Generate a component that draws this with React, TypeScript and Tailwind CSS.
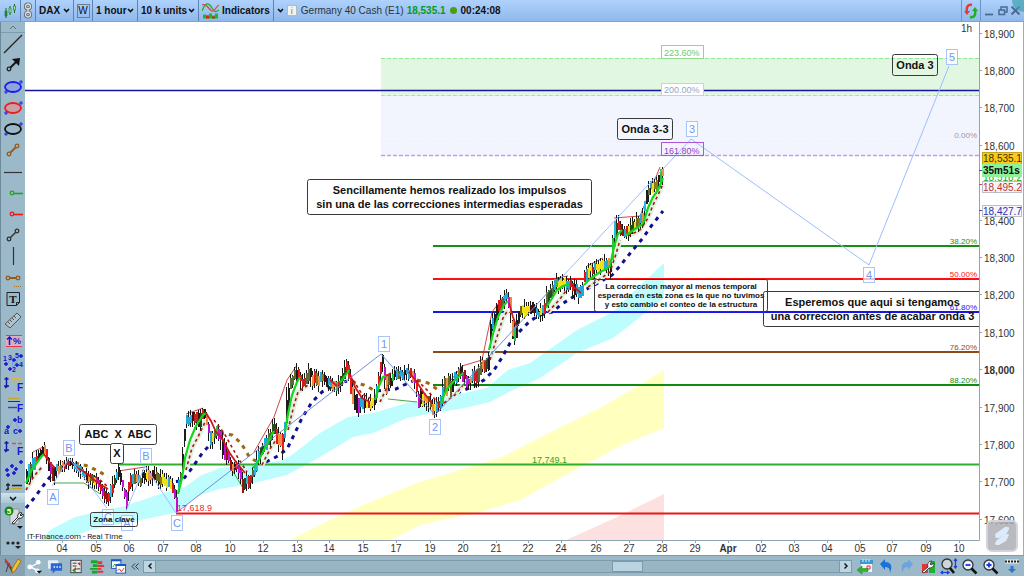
import type { ReactNode } from "react";

const FONT = "font-['Liberation_Sans',Arial,sans-serif]";

/* ---------- chart data ---------- */

// price envelope: x, high, low
const RANGE: [number, number, number][] = [
    [26, 465, 487], [30, 460, 480], [33, 452, 475], [39, 450, 460], [43, 440, 456], [47, 450, 470],
    [52, 464, 487], [57, 462, 475], [63, 461, 470], [70, 459, 466], [76, 463, 474], [82, 466, 478],
    [88, 472, 487], [95, 474, 486], [100, 481, 494], [104, 487, 500], [108, 492, 507], [111, 479, 498],
    [115, 474, 487], [118, 465, 484], [122, 479, 493], [126, 485, 511], [130, 473, 491], [136, 470, 485],
    [140, 474, 487], [145, 466, 481], [150, 470, 486], [155, 468, 483], [160, 472, 489], [165, 473, 487],
    [170, 476, 491], [173, 480, 496], [176, 490, 513], [178, 476, 495], [181, 464, 481], [183, 430, 465],
    [186, 414, 431], [190, 412, 425], [195, 411, 426], [199, 408, 431], [203, 404, 420], [207, 413, 430],
    [209, 424, 449], [213, 430, 446], [217, 422, 441], [220, 427, 449], [224, 439, 463], [228, 449, 469],
    [231, 459, 474], [235, 461, 471], [239, 463, 483], [243, 475, 498], [246, 473, 491], [250, 474, 491],
    [254, 462, 479], [257, 449, 469], [261, 444, 459], [265, 434, 451], [270, 427, 445], [274, 417, 436],
    [277, 426, 450], [281, 435, 451], [283, 428, 465], [285, 398, 435], [287, 379, 426], [289, 376, 396],
    [293, 370, 384], [297, 363, 379], [301, 377, 391], [305, 374, 388], [309, 363, 385], [315, 371, 393],
    [320, 369, 386], [325, 373, 387], [330, 377, 391], [335, 381, 395], [340, 374, 389], [344, 361, 379],
    [347, 355, 373], [350, 367, 396], [353, 387, 409], [358, 390, 422], [363, 394, 410], [368, 397, 409],
    [373, 397, 410], [376, 380, 401], [380, 360, 386], [382, 354, 373], [386, 369, 400], [390, 374, 386],
    [395, 364, 381], [400, 369, 381], [406, 367, 379], [411, 364, 379], [415, 374, 396], [418, 388, 408],
    [425, 392, 408], [430, 397, 411], [433, 401, 416], [437, 399, 415], [441, 387, 409], [444, 369, 396],
    [450, 374, 397], [455, 369, 386], [460, 365, 379], [464, 369, 386], [468, 377, 389], [473, 369, 386],
    [477, 367, 389], [481, 354, 373], [485, 357, 376], [488, 348, 371], [490, 315, 352], [494, 311, 326],
    [497, 299, 319], [502, 293, 309], [507, 291, 302], [510, 294, 322], [513, 325, 351], [517, 314, 341],
    [519, 301, 326], [525, 302, 315], [532, 301, 315], [538, 307, 321], [542, 304, 322], [546, 289, 311],
    [550, 284, 301], [556, 275, 291], [562, 277, 292], [568, 276, 291], [573, 281, 296], [578, 284, 304],
    [582, 279, 296], [585, 263, 281], [590, 264, 279], [596, 261, 276], [601, 257, 271], [606, 257, 273],
    [610, 257, 276], [612, 229, 260], [614, 217, 246], [618, 216, 233], [623, 227, 241], [628, 224, 239],
    [633, 217, 233], [638, 214, 229], [643, 207, 226], [645, 190, 216], [649, 180, 196], [654, 177, 193],
    [658, 174, 189], [660, 165, 187], [663, 168, 180],
];

const UP = ["#2a4a20", "#1fa8d8", "#e01818", "#1c1c1c", "#5a6a3a", "#2fb5e0", "#30c040"];
const DOWN = ["#a01010", "#f01818", "#1c1c1c", "#f08848", "#e01515", "#c818d8", "#c010d0"];
const SIDE = ["#f0e018", "#8a7a20", "#28a8d8", "#6a6a20", "#c82020", "#28a8d8", "#f09040", "#401010"];

const noise = (n: number) => {
    const v = Math.sin(n * 127.1 + 11.7) * 43758.5453;
    return v - Math.floor(v);
};

type Candle = { x: number; hi: number; lo: number; top: number; bottom: number; color: string };

const CANDLES: Candle[] = [];
for (let i = 0, seg = 0; ; i++) {
    const x = 26 + i * 2;
    if (x > 662) break;
    while (seg < RANGE.length - 2 && RANGE[seg + 1][0] < x) seg++;
    const a = RANGE[seg];
    const b = RANGE[seg + 1];
    const t = (x - a[0]) / (b[0] - a[0]);
    const hi = a[1] + (b[1] - a[1]) * t;
    const lo = a[2] + (b[2] - a[2]) * t;
    const h = lo - hi;
    const slope = (b[1] + b[2] - a[1] - a[2]) / (b[0] - a[0]);
    const set = slope < -2.5 ? UP : slope > 2.5 ? DOWN : SIDE;
    const top = hi + h * (0.05 + 0.3 * noise(i * 3));
    // neighbouring bars often share a colour
    const run = noise(i * 11) > 0.5 ? i : i - 1;
    CANDLES.push({
        x,
        hi: hi - 3 + h * 0.45 * noise(i),
        lo: lo + 3 - h * 0.45 * noise(i + 500),
        top,
        bottom: top + h * (0.4 + 0.3 * noise(i * 7)),
        color: set[Math.floor(noise(run * 5 + 2) * set.length)],
    });
}

const FAST_UP = [
    "26,483 31,471 36,464 41,457 44,454",
    "178,494 182,478 185,458 190,440 196,426 203,415 206,413",
    "253,468 258,462 264,450 270,438 274,431",
    "285,432 288,414 292,395 297,382 300,377",
    "340,383 345,376 349,370",
    "375,400 379,386 383,377 386,376",
    "441,403 446,390 455,380 463,373",
    "489,350 493,334 498,317 504,305 508,301",
    "546,308 551,300 557,290 563,286 570,284",
    "584,285 590,279 597,274 604,270 610,266 614,247 618,234 622,230",
    "625,236 635,229 643,224 648,208 653,197 658,190 663,178",
];
const FAST_DOWN = [
    "44,454 50,463 55,468", "76,467 86,473 98,483 108,489", "206,413 211,421 216,432 222,438 229,452 236,462 245,473",
    "330,380 337,386", "386,376 391,373", "350,374 355,387 362,398 370,402",
    "409,372 416,381 424,393 432,403", "509,303 513,317 517,328", "570,284 576,289 581,293",
];
const STOP_UP = [
    "26,490 34,476 42,467", "186,470 192,448 198,437 206,420", "262,465 270,449 276,440",
    "288,430 294,405 298,392 308,385", "380,402 388,385", "444,403 455,395 463,385",
    "490,360 496,340 503,318 508,310", "548,312 560,299 568,288", "588,287 600,279 610,272 616,254 620,240",
    "628,236 640,230 648,218 653,205 658,195 663,184",
];
const STOP_DOWN = ["84,472 98,478 108,487", "214,420 224,433 238,458 247,472", "353,380 362,394 372,399", "417,380 428,391 438,403"];
const SLOW_UP = [
    "26,508 35,497 43,486 50,477 55,471", "158,483 170,482 182,481 192,468 203,452 212,443",
    "266,462 278,456 287,449 293,437 302,418 312,402 322,392 333,386 347,381", "377,391 385,390 396,389 404,385 413,381",
    "457,393 472,387 484,380 494,370 503,356 510,343 519,332 530,321 540,315 552,312 562,304 573,297 583,291 600,282 612,275 620,266 632,251 643,238 652,225 663,211",
];
const SLOW_DOWN = ["75,463 88,466 100,472 108,477", "220,433 232,435 241,443 250,458 262,464", "352,382 364,385 374,390", "417,380 428,383 440,391"];

const RED_TREND = ["33,452 43,447", "118,471 145,467", "186,414 203,408", "254,452 274,417 287,380 297,365", "448,384 462,366 482,360 492,312 507,292", "556,278 568,276", "587,266 603,258", "614,218 640,216 660,167"];
const GREEN_TREND = ["54,483 84,483 100,494", "388,399 417,402", "232,470 243,488"];

const LEVELS = [
    { y: 246, color: "#159015", label: "38.20%" },
    { y: 279, color: "#ff1010", label: "50.00%" },
    { y: 312, color: "#1515f0", label: "61.80%" },
    { y: 352, color: "#8b4a1c", label: "76.20%" },
    { y: 385, color: "#128a12", label: "88.20%" },
];

const PRICES: [string, number][] = [
    ["18,900", 34], ["18,800", 71], ["18,700", 108], ["18,600", 146], ["18,400", 221], ["18,300", 258],
    ["18,200", 295], ["18,100", 333], ["18,000", 370], ["17,900", 408], ["17,800", 445], ["17,700", 482], ["17,600", 520],
];

const DAYS: [string, number][] = [
    ["04", 62], ["05", 96], ["06", 129], ["07", 163], ["08", 196], ["10", 230], ["12", 263], ["13", 297],
    ["14", 329], ["15", 363], ["17", 396], ["19", 430], ["20", 463], ["21", 496], ["22", 528], ["24", 561],
    ["26", 596], ["27", 629], ["28", 662], ["29", 695], ["Apr", 728], ["02", 761], ["03", 794], ["04", 827],
    ["05", 860], ["07", 892], ["09", 926], ["10", 959],
];

const WAVES: [string, number, number][] = [
    ["A", 53, 497], ["B", 69, 448], ["C", 108, 517], ["A", 127, 523], ["B", 146, 456], ["C", 177, 523],
    ["1", 384, 344], ["2", 435, 427], ["3", 692, 129], ["4", 869, 275], ["5", 952, 57],
];

/* ---------- chart ---------- */

function Lines({ list, ...rest }: { list: string[]; stroke: string; strokeWidth: number; strokeDasharray?: string }) {
    return (
        <g fill="none" {...rest}>
            {list.map((points) => <polyline key={points} points={points} />)}
        </g>
    );
}

function Note({ x, y, w, h, size, lines, step = 13, fill = "none" }: {
    x: number; y: number; w: number; h: number; size: number; lines: string[]; step?: number; fill?: string;
}) {
    const first = y + h / 2 - ((lines.length - 1) * step) / 2 + size * 0.36;
    return (
        <g>
            <rect x={x} y={y} width={w} height={h} rx="2" fill={fill} stroke="#3a3a3a" />
            {lines.map((line, i) => (
                <text key={line} x={x + w / 2} y={first + i * step} textAnchor="middle" fontSize={size} fontWeight="bold" fill="#111" xmlSpace="preserve">
                    {line}
                </text>
            ))}
        </g>
    );
}

function Chart() {
    return (
        <svg viewBox="25 22 998 533" className={`block h-full w-full bg-white ${FONT}`} role="img" aria-label="Germany 40 Cash, 1 hour">
            <defs>
                <clipPath id="plot"><rect x="25" y="22" width="954" height="519" /></clipPath>
            </defs>
            <g clipPath="url(#plot)">
                <rect x="381" y="58" width="598" height="38" fill="#e2f7e2" />
                <rect x="381" y="96" width="598" height="60" fill="#f2f5fe" />
                <path d="M381 58.5H979" stroke="#90e890" strokeDasharray="4 2" />
                <path d="M381 95.5H979" stroke="#c3cfd8" strokeDasharray="4 2" />
                <path d="M381 155.5H979" stroke="#cc9ae8" strokeDasharray="4 2" strokeWidth="1.4" />
                <path d="M381 141.5H979" stroke="#e9ecf6" strokeDasharray="1 2" />
                <path d="M25 90.5H979" stroke="#1414a0" strokeWidth="1.6" />

                {/* clouds */}
                <path fill="#bdfdfd" d="M40 541L50 530L75 517L100 511L125 506L160 494L185 487L200 476L220 468L250 465L280 461L292 455L320 433L348 417L373 413L407 403L433 399L460 394L487 388L508 370L530 363L577 330L613 312L630 295L664 263V298L630 325L613 338L577 353L540 378L513 390L490 402L460 409L433 413L407 418L373 433L353 437L320 457L287 475L250 484L220 489L200 495L175 513L130 522L90 530L62 541Z" />
                <path fill="#ffffbe" d="M288 541L330 520L375 500L417 483L460 470L500 458L555 430L600 408L640 385L664 370V428L620 446L560 478L520 500L480 512L420 525L388 541Z" />
                <path fill="#fde0e0" d="M564 541L615 518L664 494V541Z" />

                {LEVELS.map((l) => <path key={l.y} d={`M433 ${l.y}H979`} stroke={l.color} strokeWidth="2" />)}
                <path d="M118 464.5H979" stroke="#2fae2f" strokeWidth="2" />
                <path d="M176 513.5H979" stroke="#e81818" strokeWidth="2" />

                <Lines list={SLOW_UP} stroke="#10108e" strokeWidth={3} strokeDasharray="4 5" />
                <Lines list={SLOW_DOWN} stroke="#9a6a10" strokeWidth={3} strokeDasharray="4 5" />
                <Lines list={RED_TREND} stroke="#d03030" strokeWidth={0.9} />
                <Lines list={GREEN_TREND} stroke="#30a030" strokeWidth={0.9} />
                <Lines list={STOP_UP} stroke="#dff2df" strokeWidth={5} />
                <g shapeRendering="crispEdges">
                    {CANDLES.map((c) => (
                        <g key={c.x}>
                            <rect x={c.x} y={c.hi} width="1" height={c.lo - c.hi} fill="#181818" />
                            <rect x={c.x} y={c.top} width="2" height={c.bottom - c.top} fill={c.color} />
                        </g>
                    ))}
                </g>
                <Lines list={FAST_UP} stroke="#12d81c" strokeWidth={2.2} />
                <Lines list={FAST_DOWN} stroke="#d01818" strokeWidth={1.8} />
                <Lines list={STOP_UP} stroke="#b01515" strokeWidth={1.6} strokeDasharray="3 3" />
                <Lines list={STOP_DOWN} stroke="#b01515" strokeWidth={1.6} strokeDasharray="3 3" />

                <path d="M176 513L381 354L435 415L563 276" fill="none" stroke="#6f8fdc" />
                <path d="M52 486L69 458L107 508M126 511L145 466L176 513M563 276L691 139L869 265L949 66" fill="none" stroke="#9dbdff" />

                <g fontSize="9">
                    <rect x="661.5" y="45.500" width="42" height="13" fill="#fff" stroke="#90d890" />
                    <text x="664" y="56" fill="#6ccc6c">223.60%</text>
                    <rect x="661.5" y="83.5" width="42" height="12" fill="#fff" stroke="#c4d0ea" />
                    <text x="664" y="93" fill="#93a6c8">200.00%</text>
                    <rect x="661.5" y="142.5" width="42" height="13" fill="none" stroke="#a858d8" />
                    <text x="664" y="154" fill="#9838cc">161.80%</text>
                    <text x="532" y="463" fill="#2fa32f">17,749.1</text>
                    <text x="177" y="511" fill="#f02828">17,618.9</text>
                </g>

                {WAVES.map(([t, x, y]) => (
                    <g key={`${t}${x}`}>
                        <rect x={x - 5.5} y={y - 7.5} width="11" height="15" fill="#fff" fillOpacity="0.7" stroke="#a9c4fa" />
                        <text x={x} y={y + 4} textAnchor="middle" fontSize="11" fill="#6f98f0">{t}</text>
                    </g>
                ))}

                <Note x={307.5} y={179.5} w={284} h={35} size={11} fill="#fff" step={14} lines={["Sencillamente hemos realizado los impulsos", "sin una de las correcciones intermedias esperadas"]} />
                <Note x={617.5} y={118.5} w={55} h={21} size={11} lines={["Onda 3-3"]} />
                <Note x={892.5} y={54.5} w={45} h={21} size={11} lines={["Onda 3"]} />
                <Note x={79.5} y={424.5} w={77} h={20} size={11} fill="#fff" lines={["ABC  X  ABC"]} />
                <Note x={110.5} y={443.5} w={13} h={20} size={11} fill="#fff" lines={["X"]} />
                <Note x={90.5} y={512.5} w={47} h={14} size={8} lines={["Zona clave"]} />
                <Note x={594.5} y={279.5} w={173} h={32} size={8} step={9} lines={["La correccion mayor al menos temporal", "esperada en esta zona es la que no tuvimos", "y esto cambio el conteo de la estructura"]} />
                <Note x={763.5} y={291.5} w={218} h={35} size={11} step={14} lines={["Esperemos que aqui si tengamos", "una correccion antes de acabar onda 3"]} />

                <g fontSize="8" textAnchor="end">
                    {LEVELS.map((l) => <text key={l.y} x="977" y={l.y - 2} fill={l.color}>{l.label}</text>)}
                    <text x="977" y="138" fill="#999">0.00%</text>
                </g>
                <text x="961" y="32" fontSize="10" fill="#333">1h</text>
                <text x="27" y="539" fontSize="8" fill="#222" className="font-['Roboto',sans-serif]">IT-Finance.com - Real Time</text>
            </g>

            {/* axes */}
            <path d="M25 540.5H979.5V22" fill="none" stroke="#8fa5b5" />
            {PRICES.map(([label, y]) => (
                <g key={label}>
                    <path d={`M979 ${y - 0.5}h3`} stroke="#8fa5b5" />
                    <text x="984" y={y + 4} fontSize="10" fill="#333" fontWeight={label === "18,000" ? "bold" : "normal"}>{label}</text>
                </g>
            ))}
            {DAYS.map(([label, x]) => (
                <g key={x}>
                    <path d={`M${x + 0.5} 541v2`} stroke="#8fa5b5" />
                    <text x={x} y="552" textAnchor="middle" fontSize="10" fill="#333" fontWeight={label === "Apr" ? "bold" : "normal"}>{label}</text>
                </g>
            ))}
            <text x="983" y="181" fontSize="10" fill="#20a020">18,518.2</text>
            <path d="M979 170.5h3M979 210.5h3" stroke="#4444aa" />
            <path d="M979 184.5h3" stroke="#e04040" />
            <rect x="982.5" y="152.5" width="39" height="12" fill="#f7cb18" stroke="#c9a216" />
            <text x="983" y="162" fontSize="10" fill="#3a3000">18,535.1</text>
            <rect x="982" y="164" width="40" height="13" fill="#8df09a" />
            <text x="983" y="174" fontSize="10" fontWeight="bold" fill="#111">35m51s</text>
            <rect x="982.5" y="181.5" width="39" height="11" fill="#f6f6f8" stroke="#b8c0c8" />
            <text x="983" y="191" fontSize="10" fill="#c03030">18,495.2</text>
            <rect x="982.5" y="205.5" width="39" height="11" fill="#f6f6f8" stroke="#b8c0c8" />
            <text x="983" y="215" fontSize="10" fill="#3030b0">18,427.7</text>

            {/* logo badge */}
            <rect x="987" y="521" width="30" height="30" rx="5" fill="#a9a9b1" fillOpacity="0.8" stroke="#d3d3d9" strokeWidth="2" />
            <path d="M995 536c0-2 1-3 3-4l7-5h3c1 0 1 1 1 2l-2 4-8 5h-3zM995 543l2-3 8-6h3c1 0 1 2 0 3l-2 4-7 4h-3c-1 0-1-1-1-2z" fill="#dcebfb" />
        </svg>
    );
}

/* ---------- left tool bar ---------- */

const Dots = ({ color, pts }: { color: string; pts: [number, number][] }) => (
    <g fill="#9bb9c8" stroke={color} strokeWidth="1.3">
        {pts.map(([x, y]) => <circle key={`${x}-${y}`} cx={x} cy={y} r="1.8" />)}
    </g>
);

const oval = (stroke: string, fill: string) => (
    <>
        <ellipse cx="12" cy="11" rx="8" ry="5" fill={fill} stroke={stroke} strokeWidth="1.8" />
        <path d="M18 6h4M20 4v4M3 16h4M5 14v4" stroke="#2222e8" />
    </>
);

const F = ({ y = 18 }: { y?: number }) => <text x="16" y={y} fontSize="10" fontWeight="bold" fill="#1616e0">F</text>;
const anchor = <path d="M5.500 4v10M3.500 6h4M3 13h5M4 15l3-2" stroke="#1515a8" strokeWidth="1.4" fill="none" />;
const plus = (x: number, y: number) => `M${x - 2} ${y}h4M${x} ${y - 2}v4`;

const TOOLS: [string, ReactNode][] = [
    ["Line", <path d="M3 20L21 2" stroke="#222" strokeWidth="1.2" />],
    ["Arrow", <><path d="M8 15l8-8" stroke="#111" strokeWidth="1.8" /><path d="M11 5l8-1-1 8z" fill="#111" /><Dots color="#222" pts={[[8, 15]]} /></>],
    ["Blue ellipse", oval("#1a1af0", "#8ea4dc")],
    ["Red ellipse", oval("#f01a1a", "#c9a0a8")],
    ["Ellipse", oval("#111", "none")],
    ["Segment", <><path d="M8 15l8-8" stroke="#9a5a14" strokeWidth="1.8" /><Dots color="#9a5a14" pts={[[8, 15], [16, 7]]} /></>],
    ["Horizontal line", <path d="M3 11.5h18" stroke="#333" strokeWidth="1.2" />],
    ["Green ray", <><path d="M12 11.5h10" stroke="#22a622" strokeWidth="1.6" /><Dots color="#22a622" pts={[[11, 11]]} /></>],
    ["Red ray", <><path d="M12 11.5h10" stroke="#f01a1a" strokeWidth="1.6" /><Dots color="#f01a1a" pts={[[11, 11]]} /></>],
    ["Trend segment", <><path d="M8 15l8-8" stroke="#333" strokeWidth="1.4" /><Dots color="#333" pts={[[8, 15], [16, 7]]} /></>],
    ["Vertical line", <path d="M12.5 2v18" stroke="#333" strokeWidth="1.2" />],
    ["Horizontal segment", <><path d="M8 11h8" stroke="#9a5a14" strokeWidth="2" /><Dots color="#9a5a14" pts={[[7, 11], [17, 11]]} /><path d="M13 19.5h8" stroke="#a5742e" strokeDasharray="1 1" /></>],
    ["Text", <><path d="M6 4.5h12.5v10l-3 3H6z" fill="none" stroke="#222" /><path d="M18.5 14.5h-3v3" fill="none" stroke="#222" /><text x="12" y="15" fontSize="11" fontWeight="bold" textAnchor="middle" fill="#111" className="font-['Liberation_Serif',serif]">T</text></>],
    ["Ruler", <><path d="M4 15L16 4l4 4L9 19z" fill="#aec4ce" stroke="#555" /><path d="M7 13l2 2M9 11l2 2M11 9l2 2M13 7l2 2" stroke="#555" /></>],
    ["Percent change", <><rect x="5" y="5" width="16" height="11" fill="#d8b0c0" /><path d="M5 5.5h16M5 16.5h16" stroke="#e83a4a" /><path d="M8.5 15V7M6 9.5l2.5-2.5 2.5 2.5" fill="none" stroke="#1515d0" strokeWidth="1.5" /><text x="12" y="14" fontSize="9" fontWeight="bold" fill="#1515d0">%</text></>],
    ["Elliott wave", <><path d="M5 14L11 5l1 11 6-11" stroke="#6f98f0" fill="none" /><path d={plus(5, 12) + plus(13, 8) + plus(20, 4) + plus(9, 17) + plus(16, 13)} stroke="#1515d0" strokeWidth="1.4" /><g fontSize="7" fontWeight="bold" fill="#1515d0"><text x="2" y="9">1</text><text x="7" y="8">3</text><text x="14" y="6">5</text><text x="11" y="20">2</text><text x="18" y="15">4</text></g></>],
    ["Fibonacci retracement", <>{anchor}<path d="M11 5.5h10M11 8.5h10" stroke="#d8b848" strokeDasharray="3 1" strokeWidth="1.4" /><path d="M11 12.5h5" stroke="#9eb2e8" /><F /></>],
    ["Fibonacci levels", <><path d="M7 4.5h12" stroke="#c8a828" strokeWidth="1.4" /><path d="M7 7.5h12" stroke="#333" /><path d="M7 13.5h9" stroke="#3a3ad8" strokeWidth="1.4" /><F /></>],
    ["ABC pattern", <><path d="M6 16L13 3l6 14" stroke="#7fa4e8" fill="none" /><path d={plus(7, 12) + plus(14, 5) + plus(19, 16)} stroke="#1515d0" strokeWidth="1.4" /><g fontSize="9" fill="#1515d0" fontWeight="bold"><text x="3" y="19">a</text><text x="16" y="8">b</text><text x="12" y="19">c</text></g></>],
    ["Fibonacci extension", <>{anchor}<path d="M11 6.5h10" stroke="#e05050" strokeDasharray="4 2" strokeWidth="1.4" /><path d="M11 12.5h4" stroke="#9eb2e8" /><F /></>],
    ["Channel points", <><path d="M5 17l14-12M5 10l14 3" stroke="#9eb8f0" /><path d={plus(6, 12) + plus(11, 8) + plus(15, 11) + plus(20, 4) + plus(7, 17) + plus(13, 15)} stroke="#1515d0" strokeWidth="1.5" /></>],
    ["Fibonacci fan", <><path d="M7 4v7M5 6h4M5 11l3-2" stroke="#222" strokeWidth="1.3" /><path d="M11 6.5h10" stroke="#222" strokeWidth="1.5" /><path d="M11 9.5h10" stroke="#c8a020" /></>],
];

function ToolBar() {
    return (
        <aside className="flex w-[25px] shrink-0 flex-col border-l border-[#6f8c9c] bg-[#9bb9c8]">
            <button aria-label="Scroll tools up" className="flex h-[11px] shrink-0 items-center justify-center border-b border-[#7f9cac]">
                <svg width="8" height="5" viewBox="0 0 8 5" fill="none" stroke="#5f7480"><path d="M1 4l3-3 3 3" /></svg>
            </button>
            <div className="flex min-h-0 flex-1 flex-col overflow-hidden">
                {TOOLS.map(([name, icon], i) => (
                    <button key={name} aria-label={name} className={`min-h-0 basis-0 overflow-hidden ${i === TOOLS.length - 1 ? "grow-2" : "grow-3"}`}>
                        <svg width="24" height="21" viewBox="0 0 24 21" className={FONT}>{icon}</svg>
                    </button>
                ))}
            </div>
            <button aria-label="Scroll tools down" className="flex h-[10px] shrink-0 items-center justify-center bg-linear-to-b from-[#cfe2ee] to-[#a9c6d6]">
                <svg width="8" height="5" viewBox="0 0 8 5" fill="none" stroke="#111" strokeWidth="1.5"><path d="M1 1l3 3 3-3" /></svg>
            </button>
            <button aria-label="Settings" className="h-7 shrink-0">
                <svg width="24" height="28" viewBox="0 0 24 28" className={FONT}>
                    <path d="M9 6h9v15H9z" fill="#d5dde2" stroke="#8896a0" />
                    <path d="M11 20l6-6a3 3 0 0 1 4-4l-2 2 1 1 2-2a3 3 0 0 1-4 4l-5 6z" fill="#fff" stroke="#222" />
                    <circle cx="8" cy="8" r="4.5" fill="#158a15" />
                    <text x="8" y="11" fontSize="8" fontWeight="bold" textAnchor="middle" fill="#fff">5</text>
                    <path d="M16 23h6l-3 3z" fill="#111" />
                </svg>
            </button>
            <button aria-label="More tools" className="h-6 shrink-0">
                <svg width="24" height="24" viewBox="0 0 24 24" fill="#222">
                    <circle cx="7" cy="12" r="1.6" /><circle cx="12" cy="12" r="1.6" /><circle cx="17" cy="12" r="1.6" />
                    <path d="M14 15h6l-3 3z" />
                </svg>
            </button>
        </aside>
    );
}

/* ---------- top bar ---------- */

const Chevron = () => (
    <svg width="7" height="5" viewBox="0 0 7 5" fill="none" stroke="#111" strokeWidth="1.6" className="pointer-events-none shrink-0">
        <path d="M1 1l2.5 2.5L6 1" />
    </svg>
);

function Pick({ label, value, width }: { label: string; value: string; width: string }) {
    return (
        <label className="flex h-full items-center border-r border-[#5d83b5] px-[3px]">
            <select aria-label={label} defaultValue={value} className={`appearance-none bg-transparent font-bold outline-none ${width}`}>
                <option>{value}</option>
            </select>
            <Chevron />
        </label>
    );
}

function TopBar() {
    return (
        <header className="relative flex h-[22px] shrink-0 items-center overflow-hidden border-b border-[#7ea3d4] bg-linear-to-b from-[#aed2fd] to-[#90b8ea] text-[10px] leading-3 text-[#111]">
            <button aria-label="Chart type" className="flex h-full w-[21px] items-center justify-center border-r border-[#5d83b5]">
                <svg width="14" height="16" viewBox="0 0 14 16" fill="#1f9a2a" stroke="#14701c">
                    <path d="M3 5v10M7 3v9M11.5 1v9" />
                    <path d="M2 8h2v5H2z" strokeWidth=".6" />
                    <path d="M6 5h2v5H6zM10.5 3h2v4h-2z" fill="#a8e0b0" strokeWidth=".6" />
                </svg>
            </button>
            <button aria-label="Link windows" className="flex h-full w-[15px] items-center justify-center border-r border-[#5d83b5]">
                <svg width="10" height="17" viewBox="0 0 10 17" fill="none">
                    <g stroke="#666" strokeWidth="3"><rect x="2.5" y="2" width="5" height="5" rx="2.5" /><rect x="2.5" y="10" width="5" height="5" rx="2.5" /><path d="M5 6v5" /></g>
                    <g stroke="#ddd" strokeWidth="1.3"><rect x="2.5" y="2" width="5" height="5" rx="2.5" /><rect x="2.5" y="10" width="5" height="5" rx="2.5" /><path d="M5 6v5" /></g>
                </svg>
            </button>
            <Pick label="Symbol" value="DAX" width="w-[24px]" />
            <button className="flex h-full w-[19px] items-center justify-center border-r border-[#5d83b5]">
                <span className="flex h-[14px] w-[13px] items-center justify-center border border-[#6480a0]">W</span>
            </button>
            <Pick label="Timeframe" value="1 hour" width="w-[31px]" />
            <Pick label="History" value="10 k units" width="w-[47px]" />
            <button className="flex h-full items-center gap-[3px] border-r border-[#5d83b5] px-[3px] font-bold">
                <svg width="17" height="17" viewBox="0 0 17 17" fill="none">
                    <path d="M0 9c4-10 7-8 10-3s4 4 7 2" stroke="#2aa82a" strokeWidth="1.3" />
                    <path d="M0 3c5-2 7 5 10 6s4-5 7-6" stroke="#d84848" strokeWidth="1.3" />
                    <path d="M1 16.500v-4h3v1h3v-2h3v2h3v-2h3v5z" fill="#10c020" />
                    <path d="M4 16.500v-3h3v3zM10 16.500v-2h3v2z" fill="#e02020" />
                </svg>
                Indicators
            </button>
            <button aria-label="Indicator list" className="flex h-full w-[13px] items-center justify-center"><Chevron /></button>
            <span className="flex h-[11px] w-[10px] items-center justify-center border border-[#b8b8b8] bg-[#f2f2ee] text-[9px] text-[#777]">i</span>
            <div className="ml-1 flex items-center gap-[3px] whitespace-nowrap">
                <span className="text-[#2a3440]">Germany 40 Cash (E1)</span>
                <span className="font-bold text-[#0a9a1a]">18,535.1</span>
                <span className="mx-px h-[7px] w-[7px] rounded-full bg-[#4aa010]" />
                <span className="font-bold">00:24:08</span>
            </div>
            <button aria-label="Refresh" className="ml-auto flex h-full w-[20px] items-center justify-center border-x border-[#6e95c8]">
                <svg width="16" height="16" viewBox="0 0 16 16" fill="none" strokeWidth="2.5">
                    <path d="M9 2C5 1 3 4 4 9" stroke="#e83838" /><path d="M1 8h6l-3 4z" fill="#e83838" />
                    <path d="M7 14c4 1 6-2 5-7" stroke="#20b020" /><path d="M9 8h6l-3-4z" fill="#20b020" />
                </svg>
            </button>
            <div className="flex w-[43px] items-center justify-between px-1 text-[#4a6a94]">
                <button aria-label="Minimize"><svg width="9" height="10" viewBox="0 0 9 10" stroke="currentColor" strokeWidth="1.8"><path d="M0 8.5h8" /></svg></button>
                <button aria-label="Restore"><svg width="10" height="10" viewBox="0 0 10 10" fill="none" stroke="currentColor" strokeWidth="1.5"><path d="M1 4h5.500v4.500H1zM3 3.500V1h6v5H7" /></svg></button>
                <button aria-label="Close"><svg width="9" height="9" viewBox="0 0 9 9" stroke="currentColor" strokeWidth="2"><path d="M.5 .5l8 8M8.500 .5l-8 8" /></svg></button>
            </div>
            <span className="pointer-events-none absolute -top-3 -right-3 h-6 w-6 rounded-full bg-[#3f9fae]/70" />
        </header>
    );
}

/* ---------- bottom bar ---------- */

const LEFT_ICONS: [string, ReactNode][] = [
    ["Share", <><path d="M14 4L5 9l9 5" fill="none" stroke="#fff" strokeWidth="1.5" /><g fill="#fff"><circle cx="13" cy="4" r="2.5" /><circle cx="4" cy="9" r="2.5" /><circle cx="12" cy="13" r="2.5" /></g><path d="M11 13h6l-3 3z" fill="#111" /></>],
    ["Chat", <><rect x="1" y="2" width="11" height="9" rx="1" fill="#e6eef6" /><path d="M4 5h12v8h-7l-3 3v-3H4z" fill="#2a66d8" /><path d="M7 9h1.5M10 9h1.5M13 9h1.5" stroke="#fff" strokeWidth="1.5" /></>],
    ["Orders", <><rect x="3" y="2" width="11" height="13" fill="#e8e8e8" stroke="#444" /><path d="M5 5h4M5 8h4M9 11h4" stroke="#333" /><path d="M10 5l3-1v4zM5 13l3-4 1 3z" fill="#e02020" /><path d="M5 12l3 2" stroke="#18a018" strokeWidth="2" /></>],
    ["Order book", <><path d="M2 2h7v3H2zM4 6h5v3H4zM1 10h8v2H1zM3 13h6v3H3z" fill="#18a828" /><path d="M9 3h5v3H9zM9 7h7v2H9zM9 10h4v2H9zM9 13h6v2H9z" fill="#e03838" /></>],
    ["Windows", <><rect x="1.5" y="1.5" width="10" height="9" fill="#fff" stroke="#1a56c8" /><path d="M1 2h11" stroke="#1a56c8" strokeWidth="2" /><path d="M3 9l2-3 2 2 3-3" stroke="#20a020" fill="none" /><rect x="6.5" y="6.5" width="10" height="9" fill="#fff" stroke="#1a56c8" /><path d="M6 7h11" stroke="#1a56c8" strokeWidth="2" /><path d="M8 13l2-2 2 3 3-4" stroke="#e03030" fill="none" /></>],
];

const RIGHT_ICONS: [string, ReactNode][] = [
    ["Go to date", <><path d="M4 2h13v4H4z" fill="#3a9ad0" /><path d="M5 6h11v8H5z" fill="#eef4f8" /><path d="M7 1v3M10 1v3M13 1v3" stroke="#d8f0ff" /><path d="M11 8h3v3h-3z" fill="none" stroke="#e03030" /><path d="M1 12l5-4v2.5h6v3H6V16z" fill="#28b828" stroke="#188018" strokeWidth=".5" /></>],
    ["Undo", <path d="M3 6l5-5v3c6 0 8 4 5 11 0-4-1-6-5-6v3z" fill="#1a70dc" />],
    ["Redo", <path d="M15 6l-5-5v3C4 4 2 8 5 15c0-4 1-6 5-6v3z" fill="#6ea4dc" />],
    ["Chart settings", <><path d="M10 3h6v12h-6z" fill="#20b030" /><path d="M3 6h6v9H3z" fill="#e03838" /><path d="M3 14l6-5c-1-4 1-6 4-6l-2 3 1 1 3-2c0 4-2 5-5 5l-5 5z" fill="#fff" stroke="#222" strokeWidth=".8" /></>],
    ["Auto zoom", <><circle cx="7" cy="6" r="5" fill="#cfd6da" stroke="#333" strokeWidth="1.3" /><path d="M10 10l4 5" stroke="#111" strokeWidth="2.5" /><path d="M15.5 1v9M14 3l1.5-2L17 3M14 8l1.5 2L17 8M1 14.5h8M3 13l-2 1.5L3 16M7 13l2 1.5L7 16" stroke="#1a3ae0" fill="none" strokeWidth="1.2" /></>],
    ["Zoom out", <><circle cx="7" cy="7" r="5" fill="#eef4fa" stroke="#333" strokeWidth="1.3" /><path d="M10.5 10.5l5 5" stroke="#111" strokeWidth="2.5" /><path d="M4.5 7h5" stroke="#1a3ae0" strokeWidth="1.8" /></>],
    ["Zoom in", <><circle cx="7" cy="7" r="5" fill="#eef4fa" stroke="#333" strokeWidth="1.3" /><path d="M10.5 10.5l5 5" stroke="#111" strokeWidth="2.5" /><path d="M4.5 7h5M7 4.5v5" stroke="#1a3ae0" strokeWidth="1.8" /></>],
    ["Collapse", <><path d="M2 3.5h14" stroke="#eee" strokeWidth="4" /><path d="M2 3.5h14" stroke="#222" strokeWidth="2" strokeDasharray="2 1" /><path d="M7.5 8h3v3H13l-4 4-4-4h2.5z" fill="#2a76d0" /></>],
];

function BottomBar() {
    return (
        <footer className="flex h-[21px] shrink-0 items-center border-t border-[#7f9cac] bg-[#9bb9c8]">
            <button aria-label="Drawing tools" className="flex h-full w-[25px] shrink-0 items-center justify-center bg-[#86a2b0]">
                <svg width="18" height="17" viewBox="0 0 18 17" fill="none">
                    <path d="M1 3l7 10M2 14L5 5l3 9" stroke="#444" />
                    <path d="M1 1l9 12" stroke="#e02828" strokeWidth="1.3" />
                    <path d="M14 1l3 2-6 10-3 2v-4z" fill="#f4c030" stroke="#8a6010" strokeWidth=".7" />
                </svg>
            </button>
            <div className="flex shrink-0 items-center gap-1 pl-px">
                {LEFT_ICONS.map(([name, icon]) => (
                    <button key={name} aria-label={name}><svg width="17" height="17" viewBox="0 0 18 17">{icon}</svg></button>
                ))}
                <button aria-label="Hide icons" className="flex w-[8px] justify-center">
                    <svg width="8" height="7" viewBox="0 0 8 7" fill="none" stroke="#2a3a44"><path d="M4 .5l-3 3 3 3M7.5 .5l-3 3 3 3" /></svg>
                </button>
            </div>
            <div className="ml-1 flex h-[13px] min-w-0 flex-1 items-center border border-[#7d9aaa] bg-[#98b5c3]">
                <button aria-label="Scroll left" className="flex h-full w-[12px] shrink-0 items-center justify-center border-r border-[#7d9aaa] bg-[#bcd6e4]">
                    <svg width="4" height="6" viewBox="0 0 4 6" fill="none" stroke="#111" strokeWidth="1.4"><path d="M3.5 .5L1 3l2.5 2.5" /></svg>
                </button>
                <input
                    type="range"
                    aria-label="Scroll chart"
                    defaultValue={70}
                    className="h-full min-w-0 flex-1 appearance-none bg-transparent [&::-webkit-slider-thumb]:h-[11px] [&::-webkit-slider-thumb]:w-[31px] [&::-webkit-slider-thumb]:appearance-none [&::-webkit-slider-thumb]:border [&::-webkit-slider-thumb]:border-[#7d9aaa] [&::-webkit-slider-thumb]:bg-[#b9d3e1]"
                />
                <button aria-label="Scroll right" className="flex h-full w-[12px] shrink-0 items-center justify-center border-l border-[#7d9aaa] bg-[#bcd6e4]">
                    <svg width="4" height="6" viewBox="0 0 4 6" fill="none" stroke="#111" strokeWidth="1.4"><path d="M.5 .5L3 3 .5 5.5" /></svg>
                </button>
            </div>
            <div className="flex shrink-0 items-center gap-[3px] pr-[3px] pl-1">
                {RIGHT_ICONS.map(([name, icon]) => (
                    <button key={name} aria-label={name}><svg width="18" height="17" viewBox="0 0 18 17">{icon}</svg></button>
                ))}
            </div>
        </footer>
    );
}

export default function App() {
    return (
        <div className={`flex h-screen flex-col overflow-hidden bg-white ${FONT}`}>
            <TopBar />
            <div className="flex min-h-0 flex-1 border-r border-[#8fb0c8]">
                <ToolBar />
                <main className="min-w-0 flex-1"><Chart /></main>
            </div>
            <BottomBar />
        </div>
    );
}
